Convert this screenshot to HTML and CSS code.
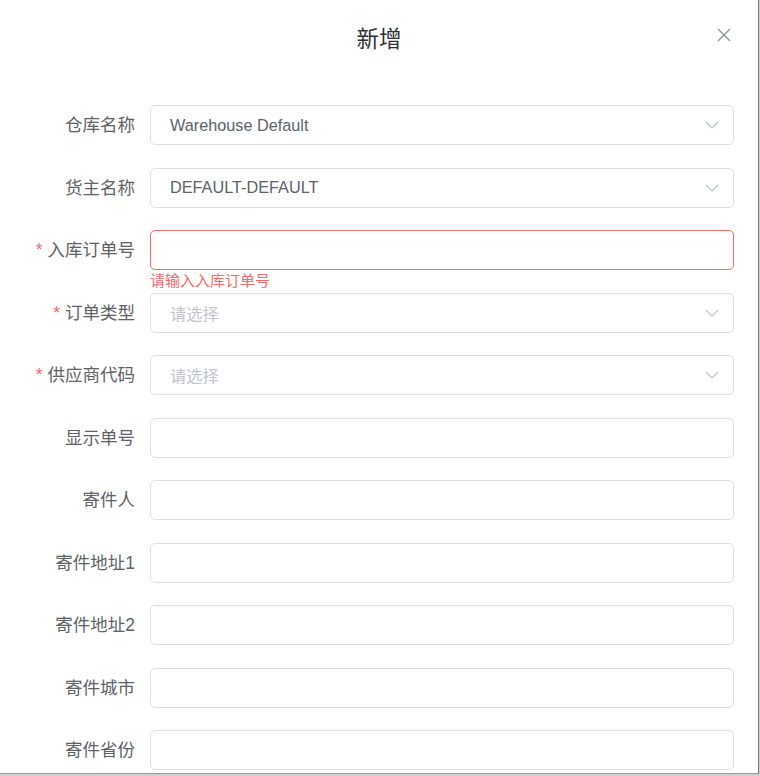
FILE: index.html
```html
<!DOCTYPE html>
<html lang="zh-CN">
<head>
<meta charset="utf-8">
<title>新增</title>
<link rel="stylesheet" href="styles.css">
</head>
<body>
<div class="dialog">
  <div class="dialog-header">
    <span class="dialog-title">新增</span>
    <button class="dialog-close" aria-label="关闭">
      <svg viewBox="0 0 20 20" width="20" height="20"><path d="M4 4 L16 16 M16 4 L4 16" stroke="#909399" stroke-width="1.4" fill="none"/></svg>
    </button>
  </div>
  <div class="dialog-body">
    <form class="form">
      <div class="form-item">
        <label class="form-label">仓库名称</label>
        <div class="form-content">
          <div class="input select"><span class="value">Warehouse Default</span><svg class="arrow" viewBox="0 0 14 8" width="14" height="8"><polyline points="1,1 7,7 13,1" fill="none" stroke="#C0C4CC" stroke-width="1.2"/></svg></div>
        </div>
      </div>
      <div class="form-item">
        <label class="form-label">货主名称</label>
        <div class="form-content">
          <div class="input select"><span class="value">DEFAULT-DEFAULT</span><svg class="arrow" viewBox="0 0 14 8" width="14" height="8"><polyline points="1,1 7,7 13,1" fill="none" stroke="#C0C4CC" stroke-width="1.2"/></svg></div>
        </div>
      </div>
      <div class="form-item">
        <label class="form-label required">入库订单号</label>
        <div class="form-content">
          <div class="input error"></div>
          <div class="form-error">请输入入库订单号</div>
        </div>
      </div>
      <div class="form-item">
        <label class="form-label required">订单类型</label>
        <div class="form-content">
          <div class="input select"><span class="placeholder">请选择</span><svg class="arrow" viewBox="0 0 14 8" width="14" height="8"><polyline points="1,1 7,7 13,1" fill="none" stroke="#C0C4CC" stroke-width="1.2"/></svg></div>
        </div>
      </div>
      <div class="form-item">
        <label class="form-label required">供应商代码</label>
        <div class="form-content">
          <div class="input select"><span class="placeholder">请选择</span><svg class="arrow" viewBox="0 0 14 8" width="14" height="8"><polyline points="1,1 7,7 13,1" fill="none" stroke="#C0C4CC" stroke-width="1.2"/></svg></div>
        </div>
      </div>
      <div class="form-item">
        <label class="form-label">显示单号</label>
        <div class="form-content"><div class="input"></div></div>
      </div>
      <div class="form-item">
        <label class="form-label">寄件人</label>
        <div class="form-content"><div class="input"></div></div>
      </div>
      <div class="form-item">
        <label class="form-label">寄件地址1</label>
        <div class="form-content"><div class="input"></div></div>
      </div>
      <div class="form-item">
        <label class="form-label">寄件地址2</label>
        <div class="form-content"><div class="input"></div></div>
      </div>
      <div class="form-item">
        <label class="form-label">寄件城市</label>
        <div class="form-content"><div class="input"></div></div>
      </div>
      <div class="form-item">
        <label class="form-label">寄件省份</label>
        <div class="form-content"><div class="input"></div></div>
      </div>
    </form>
  </div>
</div>
</body>
</html>
```
FILE: styles.css
```css
html, body {
  margin: 0;
  padding: 0;
}
body {
  background: #cfcfcf;
  width: 760px;
  height: 776px;
  overflow: hidden;
  font-family: "Liberation Sans", "Noto Sans CJK SC", sans-serif;
}
.dialog {
  width: 758px;
  height: 773px;
  background: #fff;
  border-right: 1px solid #7a7a7a;
  border-bottom: 1px solid #9a9a9a;
  overflow: hidden;
  position: relative;
}
.dialog-header {
  padding: 25px 25px 12.5px;
  text-align: center;
}
.dialog-title {
  font-size: 22.5px;
  line-height: 30px;
  color: #303133;
}
.dialog-close {
  position: absolute;
  top: 25px;
  right: 24px;
  width: 20px;
  height: 20px;
  padding: 0;
  border: 0;
  background: none;
  display: flex;
}
.dialog-body {
  padding: 37.5px 24px 0 25px;
}
.form {
  display: flex;
  flex-direction: column;
  gap: 22.5px;
}
.form-item {
  display: flex;
}
.form-label {
  width: 125px;
  flex: none;
  box-sizing: border-box;
  padding-right: 15px;
  text-align: right;
  font-size: 17.5px;
  line-height: 40px;
  color: #606266;
}
.form-label.required::before {
  content: "*";
  color: #F56C6C;
  margin-right: 5px;
  font-size: 17.5px;
}
.form-content {
  flex: 1;
  position: relative;
}
.input {
  height: 40px;
  box-sizing: border-box;
  border: 1px solid #DCDFE6;
  border-radius: 5px;
  padding: 0 19px;
  display: flex;
  align-items: center;
  font-size: 16.25px;
  color: #606266;
}
.input.error {
  border-color: #F56C6C;
}
.select {
  justify-content: space-between;
  padding-right: 14px;
}
.placeholder {
  color: #C0C4CC;
}
.arrow {
  flex: none;
}
.form-error {
  position: absolute;
  top: 100%;
  left: 0;
  padding-top: 3px;
  font-size: 15px;
  line-height: 1;
  color: #F56C6C;
}
```
